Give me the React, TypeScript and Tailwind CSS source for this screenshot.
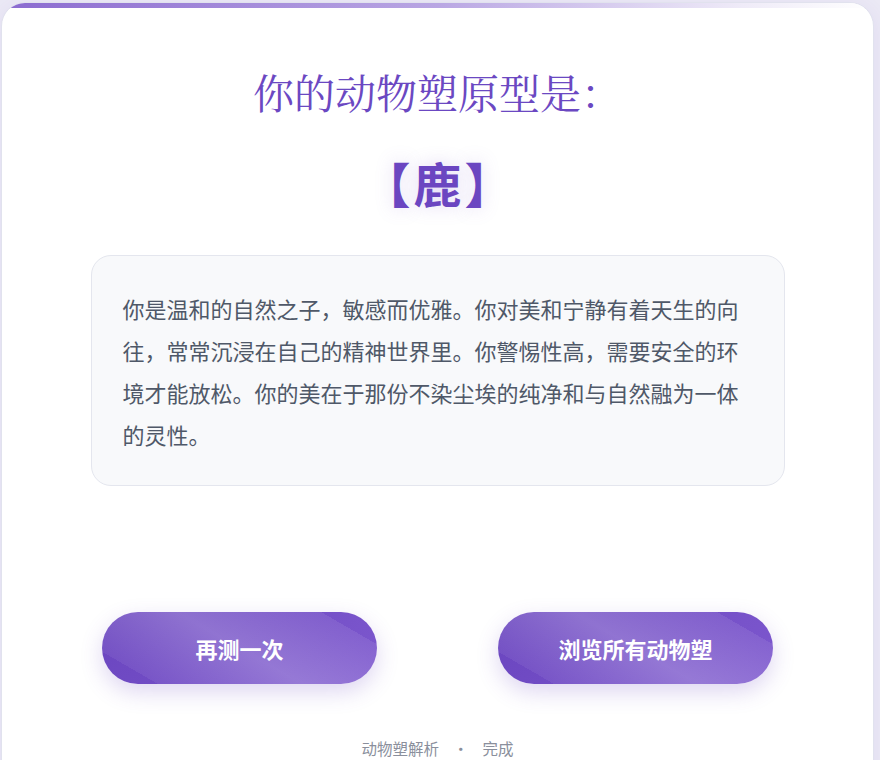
export default function App() {
  return (
    <div className="min-h-screen bg-[#ebe9f5] pt-[2px] pl-px pr-[6px] font-['Noto_Sans_CJK_SC','Noto_Sans',sans-serif]">
      <div className="relative w-full overflow-hidden rounded-[24px] border border-[#e1e2ee] bg-white pb-10 shadow-[0_4px_20px_rgba(107,70,193,0.08)]">
        {/* top accent */}
        <div className="h-[5px] w-full bg-[linear-gradient(90deg,#8b6bd0,#b9a6e3_50%,#efebf8_85%,#ffffff)]" />

        <div className="flex flex-col items-center pt-[63px]">
          <h1 className="text-[41px] leading-[48px] font-normal text-[#6b48c2] font-['Liberation_Serif','Noto_Serif_CJK_SC',serif]">
            你的动物塑原型是：
          </h1>

          <div className="mt-[34px] pl-[3px] text-[48px] leading-[58px] font-bold tracking-[3px] text-[#6b46c1] [text-shadow:0_0_18px_rgba(139,108,212,0.25)]">
            【鹿】
          </div>

          <div className="mt-[44px] w-[694px] rounded-[20px] border border-[#e4e6ee] bg-[#f8f9fb] pl-[31px] pr-8 pt-[31px] pb-[30px]">
            <p className="text-[22px] leading-[42px] text-[#4f5868]">
              你是温和的自然之子，敏感而优雅。你对美和宁静有着天生的向往，常常沉浸在自己的精神世界里。你警惕性高，需要安全的环境才能放松。你的美在于那份不染尘埃的纯净和与自然融为一体的灵性。
            </p>
          </div>

          <div className="mt-[126px] flex justify-center gap-[121px]">
            <button
              type="button"
              className="h-[72px] w-[275px] rounded-full bg-[linear-gradient(30deg,transparent_14%,rgba(255,255,255,0.06)_14%,rgba(255,255,255,0.22)_50%,rgba(255,255,255,0.08)_86%,transparent_86%),linear-gradient(135deg,#6a45bf,#7d58ce)] text-[22px] font-bold text-white shadow-[0_8px_22px_rgba(107,70,193,0.22)]"
            >
              再测一次
            </button>
            <button
              type="button"
              className="h-[72px] w-[275px] rounded-full bg-[linear-gradient(30deg,transparent_14%,rgba(255,255,255,0.06)_14%,rgba(255,255,255,0.22)_50%,rgba(255,255,255,0.08)_86%,transparent_86%),linear-gradient(135deg,#6a45bf,#7d58ce)] text-[22px] font-bold text-white shadow-[0_8px_22px_rgba(107,70,193,0.22)]"
            >
              浏览所有动物塑
            </button>
          </div>

          <div className="mt-[53px] text-[15.5px] leading-[22px] text-[#8a8f9c]">
            动物塑解析
            <span className="mx-[14px]">•</span>
            完成
          </div>
        </div>
      </div>
    </div>
  );
}
